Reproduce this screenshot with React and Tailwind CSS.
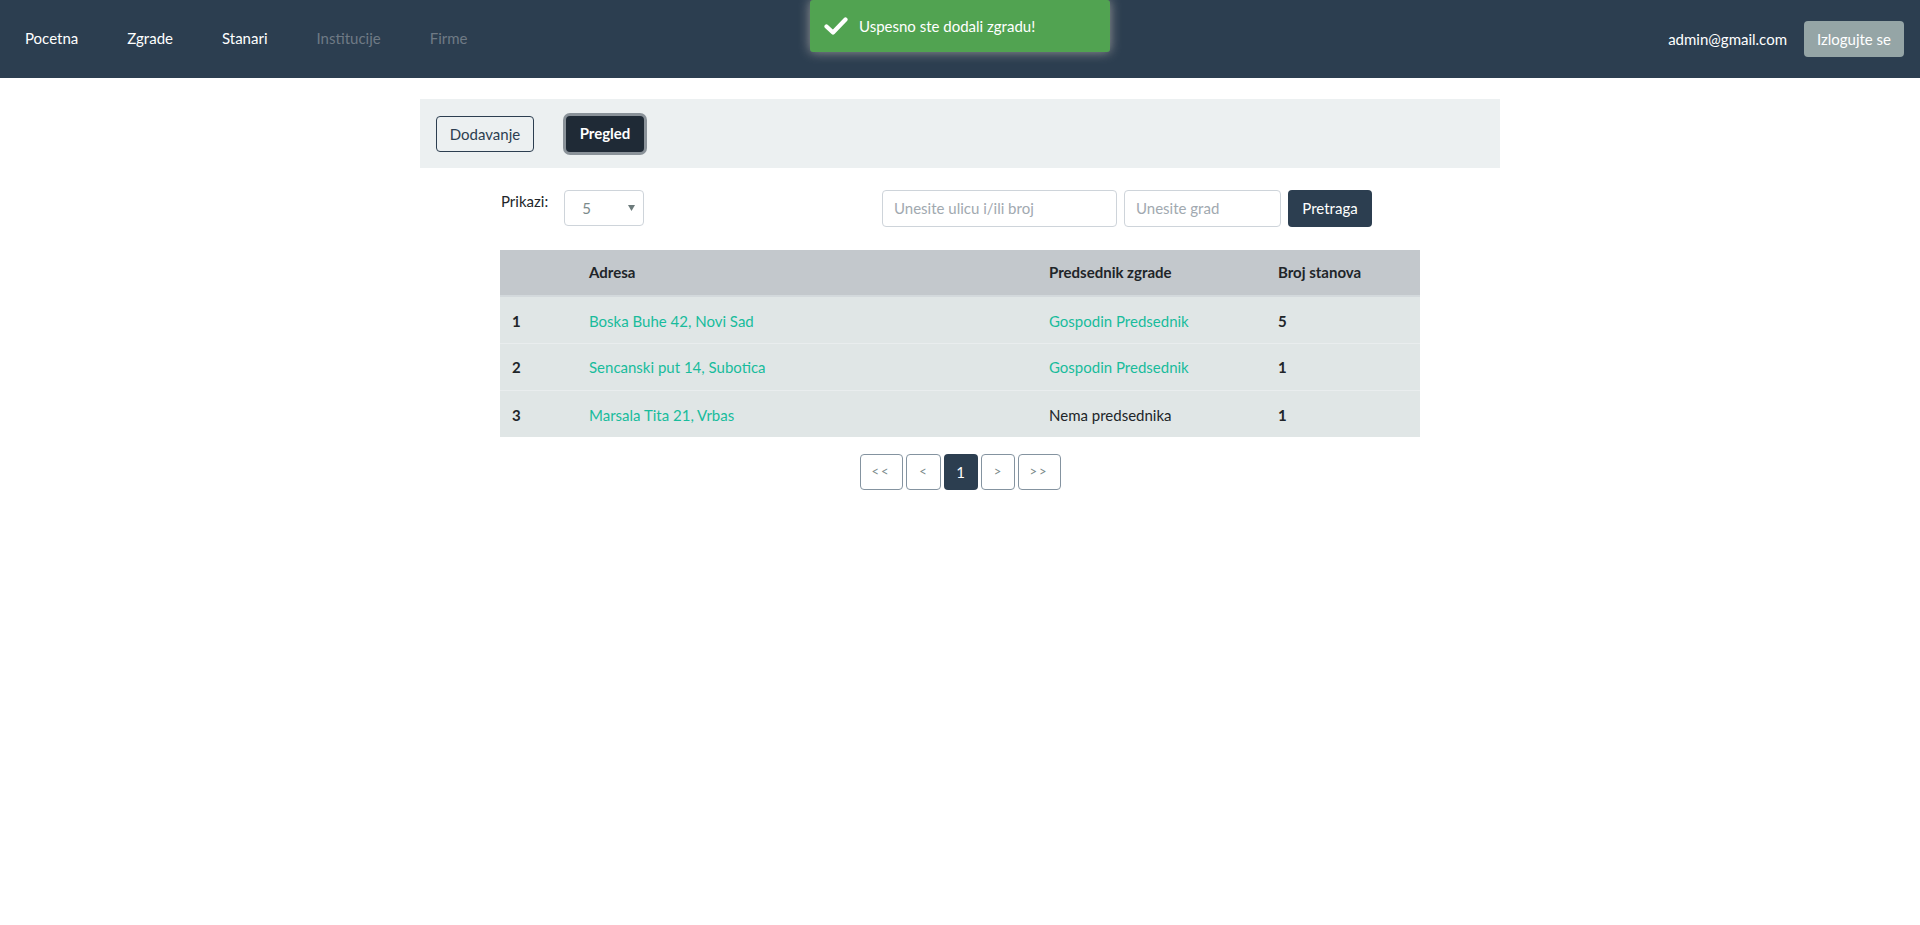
import React from "react";

function Check() {
  return (
    <svg width="24" height="20" viewBox="0 0 24 20" className="shrink-0">
      <path d="M2.5 10.5 L9 16.5 L21.5 3.5" fill="none" stroke="#fff" strokeWidth="4.2" strokeLinecap="round" strokeLinejoin="round" />
    </svg>
  );
}

const rows = [
  { n: 1, a: "Boska Buhe 42, Novi Sad", p: "Gospodin Predsednik", link: true, b: 5 },
  { n: 2, a: "Sencanski put 14, Subotica", p: "Gospodin Predsednik", link: true, b: 1 },
  { n: 3, a: "Marsala Tita 21, Vrbas", p: "Nema predsednika", link: false, b: 1 },
];

export default function App() {
  return (
    <div className="min-h-[925px] bg-white font-['Lato','Noto_Sans',sans-serif] text-[15px] text-[#212529] relative">
      {/* Navbar */}
      <nav className="h-[78px] bg-[#2c3e50] flex items-center justify-between pl-[25px] pr-[16px]">
        <div className="flex items-center gap-[49px] text-[15px] -mt-[1px]">
          <span className="text-white">Pocetna</span>
          <span className="text-white">Zgrade</span>
          <span className="text-white">Stanari</span>
          <span className="text-[#6f7a85]">Institucije</span>
          <span className="text-[#6f7a85]">Firme</span>
        </div>
        <div className="flex items-center gap-[17px]">
          <span className="text-white">admin@gmail.com</span>
          <button className="h-[36px] w-[100px] rounded-[4px] bg-[#95a5a6] text-white text-[15px]">Izlogujte se</button>
        </div>
      </nav>

      {/* Toast */}
      <div className="absolute top-0 left-1/2 -translate-x-1/2 w-[300px] h-[52px] rounded-[3px] bg-[#51a351] shadow-[0_0_12px_#999] flex items-center pl-[14px] gap-[11px] text-white text-[15px]">
        <Check />
        <span>Uspesno ste dodali zgradu!</span>
      </div>

      {/* Content container */}
      <div className="w-[1080px] mx-auto pt-[21px]">
        <div className="h-[69px] bg-[#ecf0f1] flex items-center pl-[16px] gap-[32px]">
          <button className="h-[36px] w-[98px] rounded-[4px] border border-[#2c3e50] text-[#2c3e50] text-[15px] pt-[1px]">Dodavanje</button>
          <button className="h-[36px] w-[78px] rounded-[4px] bg-[#1f2a36] text-white font-bold text-[15px] ring-[3px] ring-[#8a9299]">Pregled</button>
        </div>

        <div className="w-[920px] mx-auto">
          {/* Controls */}
          <div className="flex justify-between items-start mt-[22px] pr-[48px]">
            <div className="flex items-start gap-[16px]">
              <span className="ml-[1px]">Prikazi:</span>
              <div className="h-[36px] w-[80px] border border-[#ced4da] rounded-[4px] flex items-center justify-between pl-[17px] pr-[8px]">
                <span className="text-[#7b8a8b]">5</span>
                <svg width="7" height="6" viewBox="0 0 7 6"><path d="M0 0 L7 0 L3.5 6 Z" fill="#6c7a7b" /></svg>
              </div>
            </div>
            <div className="flex items-center gap-[7px]">
              <div className="h-[37px] w-[235px] border border-[#ced4da] rounded-[4px] flex items-center px-[11px] text-[#a1a9b0]">Unesite ulicu i/ili broj</div>
              <div className="h-[37px] w-[157px] border border-[#ced4da] rounded-[4px] flex items-center px-[11px] text-[#a1a9b0]">Unesite grad</div>
              <button className="h-[37px] w-[84px] rounded-[4px] bg-[#2c3e50] text-white text-[15px]">Pretraga</button>
            </div>
          </div>

          {/* Table */}
          <table className="w-[920px] mt-[23px] table-fixed border-collapse">
            <colgroup>
              <col className="w-[77px]" />
              <col className="w-[460px]" />
              <col className="w-[229px]" />
              <col className="w-[154px]" />
            </colgroup>
            <thead>
              <tr className="bg-[#c3c8cc] border-b-2 border-[#d3d9dc]">
                <th className="h-[46px] px-[12px] text-left font-bold"></th>
                <th className="h-[46px] px-[12px] text-left font-bold">Adresa</th>
                <th className="h-[46px] px-[12px] text-left font-bold">Predsednik zgrade</th>
                <th className="h-[46px] px-[12px] text-left font-bold">Broj stanova</th>
              </tr>
            </thead>
            <tbody>
              {rows.map((r) => (
                <tr key={r.n} className="bg-[#e0e6e6] border-t border-[#e9edee]">
                  <td className="h-[47px] px-[12px] pt-[2px] font-bold">{r.n}</td>
                  <td className="h-[47px] px-[12px] pt-[2px] text-[#18bc9c]">{r.a}</td>
                  <td className={r.link ? "h-[47px] px-[12px] pt-[2px] text-[#18bc9c]" : "h-[47px] px-[12px] pt-[2px]"}>{r.p}</td>
                  <td className="h-[47px] px-[12px] pt-[2px] font-bold">{r.b}</td>
                </tr>
              ))}
            </tbody>
          </table>

          {/* Pagination */}
          <div className="flex justify-center gap-[3px] mt-[17px]">
            <button className="h-[36px] w-[43px] rounded-[4px] border border-[#8493a0] text-[#7b8a8b] text-[13px] tracking-[2px]">&lt;&lt;</button>
            <button className="h-[36px] w-[35px] rounded-[4px] border border-[#8493a0] text-[#7b8a8b] text-[13px]">&lt;</button>
            <button className="h-[36px] w-[34px] rounded-[4px] bg-[#2c3e50] text-white text-[15px]">1</button>
            <button className="h-[36px] w-[34px] rounded-[4px] border border-[#8493a0] text-[#7b8a8b] text-[13px]">&gt;</button>
            <button className="h-[36px] w-[43px] rounded-[4px] border border-[#8493a0] text-[#7b8a8b] text-[13px] tracking-[2px]">&gt;&gt;</button>
          </div>
        </div>
      </div>
    </div>
  );
}
